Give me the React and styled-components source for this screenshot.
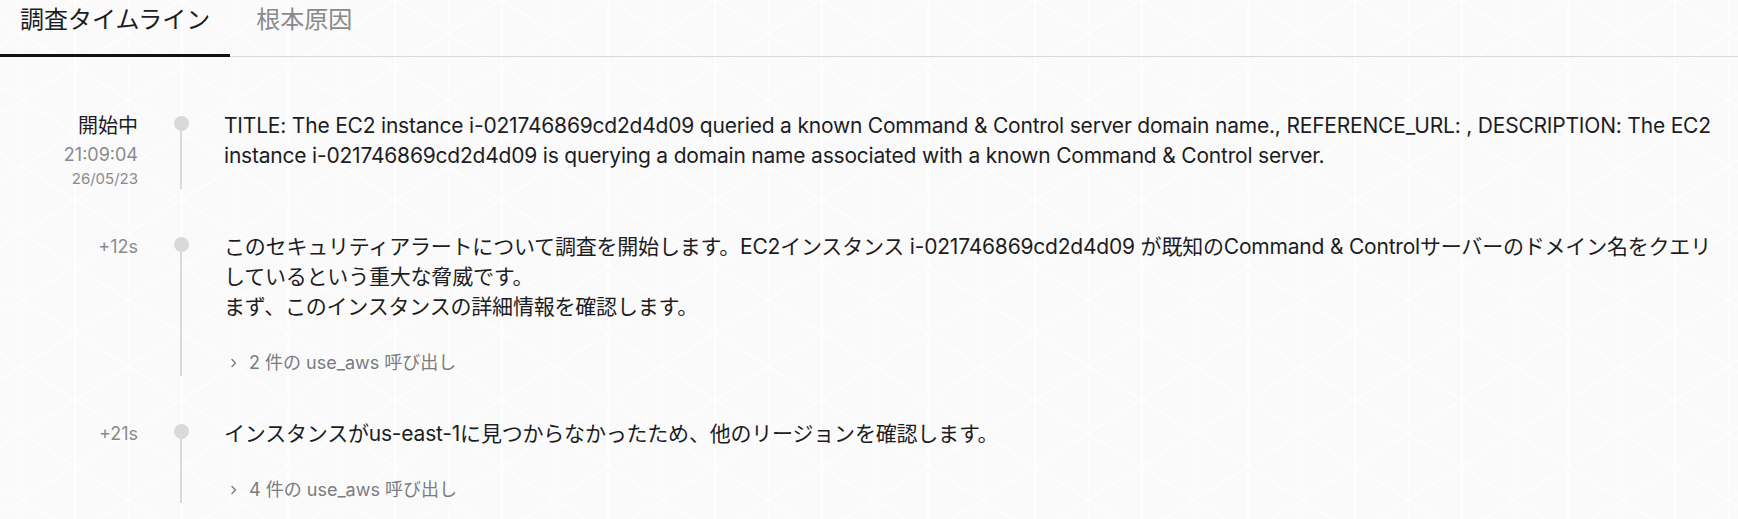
import React from "react";
import styled, { createGlobalStyle } from "styled-components";

const GlobalStyle = createGlobalStyle`
  html, body { margin: 0; padding: 0; }
  body {
    background: #fafafa;
    font-family: Inter, "Noto Sans CJK JP", sans-serif;
    color: #1d1d1f;
  }
`;

const LINE = "#fefefe";

const diag = (dir) =>
  `linear-gradient(${dir}, transparent calc(50% - 1px), ${LINE} calc(50% - 0.4px), ${LINE} calc(50% + 0.4px), transparent calc(50% + 1px))`;

const Page = styled.div`
  width: 1738px;
  min-height: 519px;
  background-color: #fafafa;
  background-image: ${diag("to top right")}, ${diag("to bottom right")},
    linear-gradient(
      90deg,
      ${LINE} 0 0.7px,
      transparent 0.7px calc(50% - 0.7px),
      ${LINE} calc(50% - 0.7px) calc(50% + 0.7px),
      transparent calc(50% + 0.7px) calc(100% - 0.7px),
      ${LINE} calc(100% - 0.7px)
    );
  background-size: 106.67px 66.67px;
  background-position: 75px 0;
`;

const TabBar = styled.div`
  display: flex;
  border-bottom: 1px solid #d9d9d9;
`;

const Tab = styled.div`
  font-size: 24px;
  line-height: 34px;
  padding: 3px 20px 17px ${(p) => (p.$first ? "20px" : "26px")};
  color: ${(p) => (p.$active ? "#1d1d1f" : "#8a8a8a")};
  border-bottom: 3px solid ${(p) => (p.$active ? "#111" : "transparent")};
  margin-bottom: -1px;
`;

const Timeline = styled.div`
  display: flex;
  flex-direction: column;
  gap: 43px;
  padding: 54px 16px 20px 0;
`;

const Row = styled.div`
  display: grid;
  grid-template-columns: 138px 86px 1fr;
`;

const TimeCol = styled.div`
  display: flex;
  flex-direction: column;
  align-items: flex-end;
  text-align: right;
`;

const Label = styled.div`
  font-size: 20px;
  line-height: 30px;
  color: #1d1d1f;
`;

const Clock = styled.div`
  font-size: 18px;
  line-height: 28px;
  color: #8a8a8e;
`;

const DateText = styled.div`
  font-size: 15px;
  line-height: 20px;
  color: #8a8a8e;
`;

const Offset = styled.div`
  font-size: 18px;
  line-height: 30px;
  color: #8a8a8e;
`;

const Rail = styled.div`
  display: flex;
  flex-direction: column;
  align-items: center;
`;

const Dot = styled.div`
  width: 15px;
  height: 15px;
  border-radius: 50%;
  background: #d9d9d9;
  margin-top: 5px;
  flex: none;
`;

const Line = styled.div`
  width: 2px;
  flex: 1;
  background: #d9d9d9;
`;

const Content = styled.div`
  display: flex;
  flex-direction: column;
  gap: 28px;
`;

const Message = styled.div`
  font-size: 21px;
  letter-spacing: -0.2px;
  line-height: 30px;
  color: #1d1d1f;
  white-space: pre-wrap;
`;

const ToolCalls = styled.div`
  display: flex;
  align-items: center;
  gap: 9px;
  font-size: 18px;
  line-height: 26px;
  color: #7b7b80;
  padding-left: 4px;
`;

const Chevron = styled.svg`
  width: 12px;
  height: 12px;
  flex: none;
`;

const rows = [
  {
    head: (
      <TimeCol>
        <Label>開始中</Label>
        <Clock>21:09:04</Clock>
        <DateText>26/05/23</DateText>
      </TimeCol>
    ),
    text:
      "TITLE: The EC2 instance i-021746869cd2d4d09 queried a known Command & Control server domain name., REFERENCE_URL: , DESCRIPTION: The EC2 instance i-021746869cd2d4d09 is querying a domain name associated with a known Command & Control server.",
  },
  {
    head: (
      <TimeCol>
        <Offset>+12s</Offset>
      </TimeCol>
    ),
    text:
      "このセキュリティアラートについて調査を開始します。EC2インスタンス i-021746869cd2d4d09 が既知のCommand & Controlサーバーのドメイン名をクエリしているという重大な脅威です。\nまず、このインスタンスの詳細情報を確認します。",
    calls: 2,
  },
  {
    head: (
      <TimeCol>
        <Offset>+21s</Offset>
      </TimeCol>
    ),
    text: "インスタンスがus-east-1に見つからなかったため、他のリージョンを確認します。",
    calls: 4,
  },
];

export default function App() {
  return (
    <Page>
      <GlobalStyle />
      <TabBar>
        <Tab $active $first>調査タイムライン</Tab>
        <Tab>根本原因</Tab>
      </TabBar>
      <Timeline>
        {rows.map((r, i) => (
          <Row key={i}>
            {r.head}
            <Rail>
              <Dot />
              <Line />
            </Rail>
            <Content>
              <Message>{r.text}</Message>
              {r.calls && (
                <ToolCalls>
                  <Chevron viewBox="0 0 12 12" fill="none">
                    <path d="M4 2.5 L7.5 6 L4 9.5" stroke="#7b7b80" strokeWidth="1.4" strokeLinecap="round" strokeLinejoin="round" />
                  </Chevron>
                  <span>{r.calls} 件の use_aws 呼び出し</span>
                </ToolCalls>
              )}
            </Content>
          </Row>
        ))}
      </Timeline>
    </Page>
  );
}
